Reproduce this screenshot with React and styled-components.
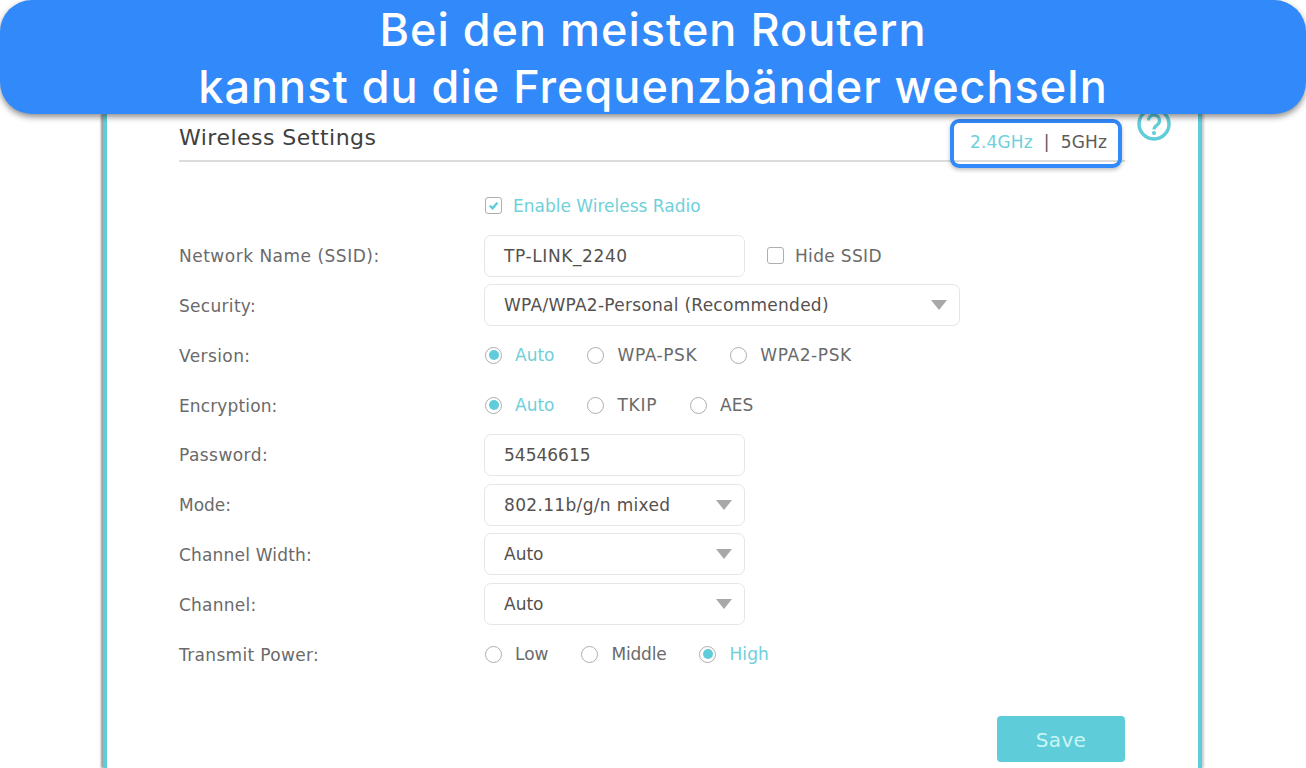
import React from "react";
import styled, { createGlobalStyle } from "styled-components";

const Global = createGlobalStyle`
  html, body { margin: 0; padding: 0; background: #fff; }
  body { font-family: "DejaVu Sans", Verdana, sans-serif; }
`;

const TEAL = "#5fcdd9";

const Page = styled.div`
  width: 1306px;
  height: 768px;
  overflow: hidden;
  background: #fff;
`;

const Banner = styled.header`
  position: relative;
  z-index: 3;
  height: 114px;
  box-sizing: border-box;
  padding-top: 2px;
  border-radius: 32px;
  background: #3289f9;
  box-shadow: 0 3px 6px rgba(0, 0, 0, 0.45);
  color: #fff;
  font-family: "Inter", sans-serif;
  font-weight: 500;
  font-size: 45px;
  letter-spacing: 1px;
  line-height: 56.5px;
  text-align: center;
`;

const Panel = styled.main`
  width: 1099px;
  height: 654px;
  box-sizing: border-box;
  margin-left: 103px;
  padding: 0 73px 0 72px;
  border-left: 4px solid ${TEAL};
  border-right: 4px solid ${TEAL};
  box-shadow: -2px 0 2px rgba(0, 0, 0, 0.4), 2px 0 2px rgba(0, 0, 0, 0.2);
`;

const Header = styled.div`
  position: relative;
  height: 48px;
  box-sizing: border-box;
  border-bottom: 2px solid #dcdcdc;
  display: flex;
  justify-content: space-between;
  align-items: center;
`;

const Title = styled.h1`
  margin: 1px 0 0;
  font-size: 22px;
  font-weight: 400;
  letter-spacing: 0.48px;
  color: #40403f;
`;

const Tabs = styled.div`
  position: relative;
  display: flex;
  gap: 11px;
  font-size: 17px;
  letter-spacing: 0.15px;
  padding-right: 18px;
  margin-top: 10px;
`;

const Tab = styled.span`
  color: ${(p) => (p.$active ? "#6fd0da" : "#5b5b5b")};
`;

const Highlight = styled.div`
  position: absolute;
  left: -20px;
  top: -13px;
  width: 172px;
  height: 49px;
  box-sizing: border-box;
  border: 4px solid #3289f9;
  border-radius: 9px;
  box-shadow: 0 2px 4px rgba(0, 0, 0, 0.25);
`;

const Help = styled.svg`
  position: absolute;
  right: -47px;
  top: -8px;
  width: 36px;
  height: 36px;
`;

const Form = styled.div`
  padding-top: 19px;
`;

const Row = styled.div`
  height: 49.8px;
  display: grid;
  grid-template-columns: 305px 1fr;
  align-items: center;
`;

const Label = styled.label`
  padding-top: 1px;
  font-size: 17px;
  letter-spacing: ${(p) => p.$spacing ?? 0.3}px;
  color: #6a6a6a;
`;

const Controls = styled.div`
  display: flex;
  align-items: center;
  gap: 32px;
`;

const FieldLine = styled.div`
  display: flex;
  align-items: center;
  gap: 21px;
`;

const Option = styled.span`
  display: inline-flex;
  align-items: center;
  gap: 13px;
  font-size: 17px;
  letter-spacing: ${(p) => p.$spacing}px;
  color: ${(p) => (p.$active ? "#6fd0da" : "#6a6a6a")};
`;

const CheckOption = styled(Option)`
  gap: 11px;
  margin-left: 1px;
`;

const Radio = styled.span`
  width: 17px;
  height: 17px;
  box-sizing: border-box;
  margin-left: 1px;
  border: 1.5px solid #aeaeae;
  border-radius: 50%;
  display: inline-flex;
  align-items: center;
  justify-content: center;
  &::after {
    content: "";
    width: 10px;
    height: 10px;
    border-radius: 50%;
    background: ${(p) => (p.$on ? TEAL : "transparent")};
  }
`;

const Box = styled.span`
  width: 17px;
  height: 17px;
  box-sizing: border-box;
  border: 1.5px solid #aeaeae;
  border-radius: 3px;
  display: inline-flex;
  align-items: center;
  justify-content: center;
`;

const Field = styled.div`
  width: ${(p) => p.$width || 261}px;
  height: 42px;
  box-sizing: border-box;
  border: 1px solid #e6e6e6;
  border-radius: 7px;
  padding: 0 12px 0 19px;
  display: flex;
  align-items: center;
  justify-content: space-between;
  font-size: 17px;
  letter-spacing: ${(p) => p.$spacing}px;
  color: #55514e;
`;

const Caret = styled.span`
  width: 0;
  height: 0;
  border-left: 8px solid transparent;
  border-right: 8px solid transparent;
  border-top: 10px solid #a8a8a8;
`;

const Actions = styled.div`
  display: flex;
  justify-content: flex-end;
  padding-top: 37px;
`;

const Save = styled.button`
  width: 128px;
  height: 46px;
  padding: 2px 0 0;
  border: 0;
  border-radius: 4px;
  background: ${TEAL};
  color: #c9f5f5;
  font-family: inherit;
  font-size: 20px;
  letter-spacing: 0.3px;
`;

const Check = () => (
  <svg width="11" height="11" viewBox="0 0 12 12">
    <path d="M2 6.2 L5 9 L10.2 3" fill="none" stroke={TEAL} strokeWidth="2.6" />
  </svg>
);

const Group = ({ items, on }) => (
  <Controls>
    {items.map(([t, spacing]) => (
      <Option key={t} $active={t === on} $spacing={spacing}>
        <Radio $on={t === on} />
        {t}
      </Option>
    ))}
  </Controls>
);

export default function App() {
  return (
    <Page>
      <Global />
      <Banner>
        Bei den meisten Routern
        <br />
        kannst du die Frequenzbänder wechseln
      </Banner>
      <Panel>
        <Header>
          <Title>Wireless Settings</Title>
          <Tabs>
            <Tab $active>2.4GHz</Tab>
            <Tab>|</Tab>
            <Tab>5GHz</Tab>
            <Highlight />
          </Tabs>
          <Help viewBox="0 0 36 36">
            <circle cx="18" cy="18" r="15" fill="none" stroke={TEAL} strokeWidth="3.5" />
            <path d="M12.5 14.5a5.5 5.5 0 1 1 8.6 4.5c-2 1.4-3.1 2.2-3.1 4.5" fill="none" stroke={TEAL} strokeWidth="3.2" />
            <circle cx="18" cy="27" r="2" fill={TEAL} />
          </Help>
        </Header>
        <Form>
          <Row>
            <span />
            <CheckOption $active $spacing={0}>
              <Box><Check /></Box>
              Enable Wireless Radio
            </CheckOption>
          </Row>
          <Row>
            <Label $spacing={0.5}>Network Name (SSID):</Label>
            <FieldLine>
              <Field $spacing={0.6}>TP-LINK_2240</Field>
              <CheckOption $spacing={0.33}><Box />Hide SSID</CheckOption>
            </FieldLine>
          </Row>
          <Row>
            <Label>Security:</Label>
            <Field $width={476} $spacing={0.27}>WPA/WPA2-Personal (Recommended)<Caret /></Field>
          </Row>
          <Row>
            <Label $spacing={0.4}>Version:</Label>
            <Group items={[["Auto", 0], ["WPA-PSK", 0.6], ["WPA2-PSK", 0.6]]} on="Auto" />
          </Row>
          <Row>
            <Label $spacing={0.13}>Encryption:</Label>
            <Group items={[["Auto", 0], ["TKIP", 0.7], ["AES", 0]]} on="Auto" />
          </Row>
          <Row>
            <Label $spacing={0.44}>Password:</Label>
            <Field $spacing={0}>54546615</Field>
          </Row>
          <Row>
            <Label $spacing={0}>Mode:</Label>
            <Field $spacing={0.33}>802.11b/g/n mixed<Caret /></Field>
          </Row>
          <Row>
            <Label $spacing={0.18}>Channel Width:</Label>
            <Field $spacing={0}>Auto<Caret /></Field>
          </Row>
          <Row>
            <Label $spacing={0.23}>Channel:</Label>
            <Field $spacing={0}>Auto<Caret /></Field>
          </Row>
          <Row>
            <Label $spacing={0.33}>Transmit Power:</Label>
            <Group items={[["Low", 0], ["Middle", -0.2], ["High", 0.1]]} on="High" />
          </Row>
        </Form>
        <Actions>
          <Save>Save</Save>
        </Actions>
      </Panel>
    </Page>
  );
}
